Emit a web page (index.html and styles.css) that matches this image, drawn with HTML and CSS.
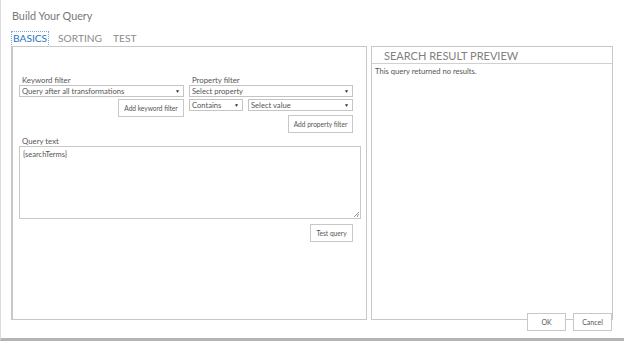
FILE: index.html
```html
<!DOCTYPE html>
<html>
  <head>
    <title>Build Your Query</title>
    <meta charset="utf-8" />
    <link rel="stylesheet" href="styles.css">
  </head>
  <body>
    <div class="dialog">
      <h2 class="dialog-title">Build Your Query</h2>

      <div class="tabs">
        <span class="tab tab-active">BASICS</span>
        <span class="tab">SORTING</span>
        <span class="tab">TEST</span>
      </div>

      <div class="panels">
        <div class="panel panel-basics">
          <div class="filters">
            <div class="filter-col keyword-col">
              <label class="field-label">Keyword filter</label>
              <div class="select select-wide">Query after all transformations</div>
              <button class="btn btn-keyword">Add keyword filter</button>
            </div>

            <div class="filter-col property-col">
              <label class="field-label">Property filter</label>
              <div class="select select-wide">Select property</div>
              <div class="form-row">
                <div class="select select-contains">Contains</div>
                <div class="select select-value">Select value</div>
              </div>
              <button class="btn btn-property">Add property filter</button>
            </div>
          </div>

          <div class="query-group">
            <label class="field-label">Query text</label>
            <div class="query-text">
              {searchTerms}
              <span class="resize-grip"></span>
            </div>
            <button class="btn btn-test">Test query</button>
          </div>
        </div>

        <div class="panel panel-preview">
          <div class="preview-title">SEARCH RESULT PREVIEW</div>
          <div class="preview-body">This query returned no results.</div>
        </div>
      </div>

      <div class="dialog-footer">
        <button class="btn btn-footer">OK</button>
        <button class="btn btn-footer">Cancel</button>
      </div>
    </div>
  </body>
</html>
```

FILE: styles.css
```css
html,
body {
  margin: 0;
  padding: 0;
  background-color: #fff;
}

body {
  width: 624px;
  height: 341px;
  overflow: hidden;
  font-family: Lato, "Open Sans", sans-serif;
  color: #555;
}

.dialog {
  height: 338px;
  border-left: 1px solid #dcdcdc;
  border-bottom: 3px solid #b4b4b4;
  display: flex;
  flex-direction: column;
}

.dialog-title {
  margin: 9px 0 0 11px;
  font-size: 10.8px;
  font-weight: normal;
  color: #777;
  line-height: 13px;
}

.tabs {
  display: flex;
  gap: 9px;
  margin: 10px 0 0 11px;
  height: 14px;
}

.tab {
  font-size: 10.2px;
  line-height: 12px;
  color: #8a8a8a;
  padding: 0 1px;
}

.tab-active {
  color: #1e73c8;
  outline: 1px dotted #7aa7d6;
}

.panels {
  display: flex;
  gap: 4px;
  margin: 0 0 0 10px;
  height: 274px;
}

.panel {
  border: 1px solid #c8c8c8;
  box-sizing: border-box;
}

.panel-basics {
  width: 356px;
  border-left-width: 2px;
  padding: 28px 5px 0 6px;
}

.panel-preview {
  width: 242px;
}

.filters {
  display: flex;
  gap: 5px;
}

.filter-col {
  display: flex;
  flex-direction: column;
  align-items: flex-end;
}

.keyword-col {
  width: 165px;
}

.property-col {
  width: 164px;
}

.field-label {
  align-self: flex-start;
  font-size: 7.8px;
  line-height: 10px;
  color: #555;
  padding-left: 3px;
}

.select {
  position: relative;
  box-sizing: border-box;
  height: 12px;
  border: 1px solid #c4c4c4;
  font-size: 7.6px;
  line-height: 10px;
  padding-left: 2px;
  color: #555;
  background-color: #fff;
  white-space: nowrap;
}

.select::after {
  content: "\25BC";
  position: absolute;
  right: 3px;
  top: 0;
  font-size: 5px;
  color: #333;
}

.select-wide {
  width: 100%;
}

.form-row {
  display: flex;
  gap: 5px;
  margin-top: 2px;
  width: 100%;
}

.select-contains {
  width: 54px;
}

.select-value {
  flex: 1;
}

.btn {
  box-sizing: border-box;
  background-color: #fff;
  border: 1px solid #c8c8c8;
  font-family: inherit;
  font-size: 6.6px;
  color: #555;
  padding: 0;
  white-space: nowrap;
  cursor: pointer;
}

.btn-keyword {
  width: 66px;
  height: 18px;
  margin-top: 2px;
}

.btn-property {
  width: 65px;
  height: 18px;
  margin-top: 4px;
}

.query-group {
  display: flex;
  flex-direction: column;
  align-items: flex-end;
  margin-top: 3px;
}

.query-text {
  position: relative;
  box-sizing: border-box;
  align-self: stretch;
  height: 73px;
  border: 1px solid #c8c8c8;
  font-size: 7.5px;
  padding: 3px 3px;
  color: #555;
}

.resize-grip {
  position: absolute;
  right: 1px;
  bottom: 1px;
  width: 5px;
  height: 5px;
  background: linear-gradient(135deg, transparent 45%, #999 45%, #999 55%, transparent 55%, transparent 70%, #999 70%, #999 80%, transparent 80%);
}

.btn-test {
  width: 43px;
  height: 18px;
  margin-top: 5px;
  margin-right: 8px;
}

.preview-title {
  font-size: 11px;
  line-height: 14px;
  color: #808080;
  padding: 2px 0 0 12px;
  height: 14px;
  border-bottom: 1px solid #d0d0d0;
}

.preview-body {
  font-size: 7.6px;
  color: #555;
  padding: 2px 0 0 3px;
}

.dialog-footer {
  display: flex;
  justify-content: flex-end;
  gap: 7px;
  margin: -7px 12px 0 0;
}

.btn-footer {
  width: 39px;
  height: 18px;
  font-size: 7px;
}
```
